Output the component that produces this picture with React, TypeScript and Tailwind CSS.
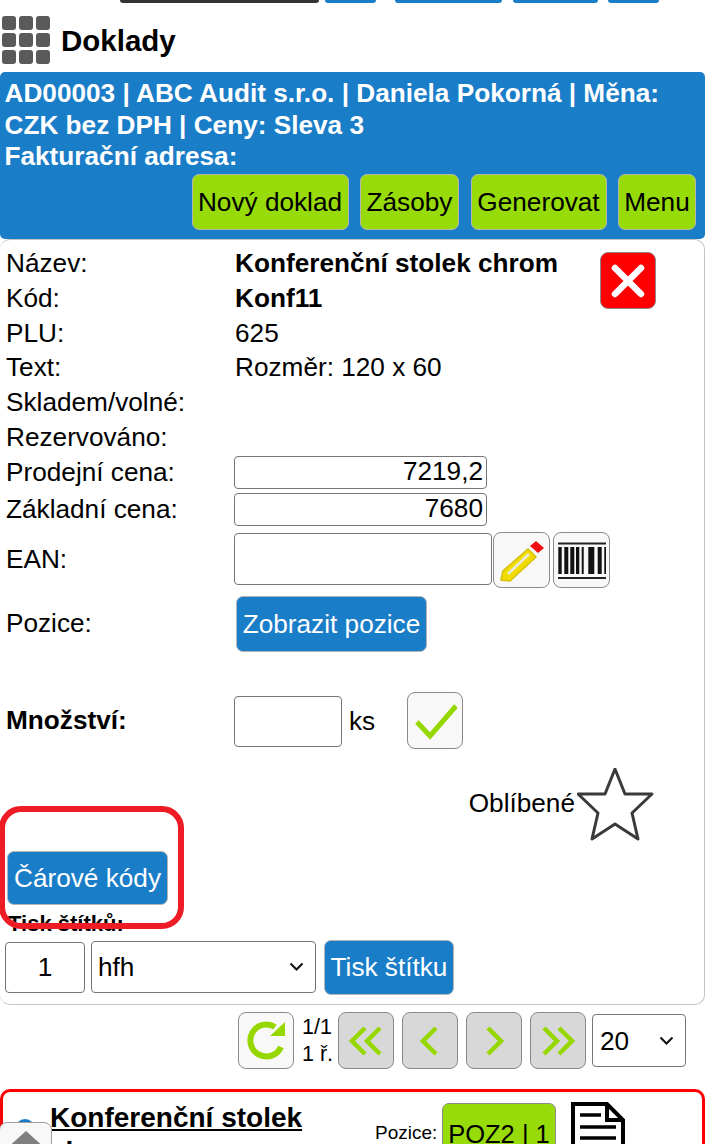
import React from "react";

const iconBtn = "flex items-center justify-center rounded-[8px] border border-[#8a8a8a] bg-[#f8f8f8]";
const input = "rounded-[4px] border border-[#767676] bg-white";
const green = "flex h-[56px] items-center justify-center rounded-[7px] border border-[#b5b5b5] bg-[#97db0a]";
const blue = "flex items-center justify-center rounded-[7px] border border-[#b5b5b5] bg-[#1a7dc8] text-white";

function Row({ label, children, bold }: { label: string; children?: React.ReactNode; bold?: boolean }) {
  return (
    <div className="flex h-[34.8px] items-center">
      <div className="w-[229px] shrink-0">{label}</div>
      <div className={bold ? "font-bold" : ""}>{children}</div>
    </div>
  );
}

function Chevron({ paths }: { paths: string[] }) {
  return (
    <svg width="36" height="32" viewBox="0 0 36 32" fill="none">
      {paths.map((d) => (
        <path key={d} d={d} stroke="#97d700" strokeWidth="4.5" />
      ))}
    </svg>
  );
}

function PagerBtn({ children }: { children: React.ReactNode }) {
  return <div className="flex h-[57px] w-[56px] items-center justify-center rounded-[8px] border border-[#8a8a8a] bg-[#d8d8d8]">{children}</div>;
}

function SelectChevron() {
  return (
    <svg width="15" height="9" viewBox="0 0 15 9" fill="none">
      <path d="M1.5 1.5 L7.5 7.5 L13.5 1.5" stroke="#111" strokeWidth="2" />
    </svg>
  );
}

export default function App() {
  return (
    <div className="relative h-[1144px] w-[705px] overflow-hidden bg-white font-['Liberation_Sans',Arial,sans-serif] text-[26.2px] leading-[32px] text-black">
      {/* Cropped toolbar along the top edge */}
      <div className="flex h-[3px] items-end overflow-hidden pl-[120px]">
        <div className="h-[3px] w-[199px] rounded-b-[3px] bg-[#333333]" />
        <div className="ml-[6px] h-[3px] w-[51px] rounded-b-[3px] bg-[#1a7dc8]" />
        <div className="ml-[19px] h-[3px] w-[107px] rounded-b-[3px] bg-[#1a7dc8]" />
        <div className="ml-[11px] h-[3px] w-[85px] rounded-b-[3px] bg-[#1a7dc8]" />
        <div className="ml-[10px] h-[3px] w-[51px] rounded-b-[3px] bg-[#1a7dc8]" />
      </div>

      {/* Title */}
      <div className="flex h-[69px] items-center pl-[2px]">
        <div className="mt-[4px] grid grid-cols-3 gap-[3px]">
          {Array.from({ length: 9 }).map((_, i) => (
            <div key={i} className="h-[14px] w-[14px] rounded-[3px] bg-[#5a5a5a]" />
          ))}
        </div>
        <div className="ml-[11px] mt-[6px] text-[29.5px] font-bold">Doklady</div>
      </div>

      {/* Header */}
      <div className="h-[167px] rounded-[5px] bg-[#1a7dc8] pl-[4.5px] pr-[5px] pt-[6px] font-bold text-white">
        <div className="h-[95px] leading-[31.6px]">
          AD00003 | ABC Audit s.r.o. | Daniela Pokorná | Měna:
          <br />
          CZK bez DPH | Ceny: Sleva 3
          <br />
          Fakturační adresa:
        </div>
        <div className="mt-[1px] flex justify-end gap-[11.5px] pr-[4px] font-normal text-black">
          <div className={`${green} w-[157px]`}>Nový doklad</div>
          <div className={`${green} w-[99px]`}>Zásoby</div>
          <div className={`${green} w-[136px]`}>Generovat</div>
          <div className={`${green} w-[78px]`}>Menu</div>
        </div>
      </div>

      {/* Item form */}
      <div className="relative h-[766px] rounded-[10px] border-b border-r border-t border-[#c4c4c4] pl-[6px] pt-[5.6px]">
        <button className="absolute left-[600px] top-[12px] flex h-[57px] w-[56px] items-center justify-center rounded-[8px] border border-[#8a8a8a] bg-[#ff0000]">
          <svg width="36" height="36" viewBox="0 0 36 36" fill="none">
            <path d="M5 5 L31 31 M31 5 L5 31" stroke="#ffffff" strokeWidth="6.5" strokeLinecap="round" />
          </svg>
        </button>

        <Row label="Název:" bold>Konferenční stolek chrom</Row>
        <Row label="Kód:" bold>Konf11</Row>
        <Row label="PLU:">625</Row>
        <Row label="Text:">Rozměr: 120 x 60</Row>
        <Row label="Skladem/volné:" />
        <Row label="Rezervováno:" />

        <div className="mt-[0.6px] flex h-[35px] items-center">
          <div className="mb-[1px] w-[228px] shrink-0">Prodejní cena:</div>
          <div className={`h-[33px] w-[253px] pr-[3px] text-right leading-[29px] ${input}`}>7219,2</div>
        </div>
        <div className="mt-[1px] flex h-[37px] items-center">
          <div className="mb-[1px] w-[228px] shrink-0">Základní cena:</div>
          <div className={`h-[33px] w-[253px] pr-[3px] text-right leading-[29px] ${input}`}>7680</div>
        </div>

        <div className="mt-[3px] flex h-[57px] items-center">
          <div className="mb-[1px] w-[228px] shrink-0">EAN:</div>
          <div className={`h-[52px] w-[258px] ${input}`} />
          <div className={`ml-[1px] mt-[1px] h-[56px] w-[57px] ${iconBtn}`}>
            <svg width="55" height="54" viewBox="0 0 55 54" fill="none">
              <path d="M7 47 L9 38 L34 16 L42 24 L16 48 Z" fill="#f2dc00" stroke="#d4c000" strokeWidth="1.5" />
              <path d="M14 41 L35 21" stroke="#e8e8d8" strokeWidth="3" />
              <path d="M42 8 L50 15 L44 20 L36 13 Z" fill="#f01010" />
            </svg>
          </div>
          <div className={`ml-[3px] mt-[1px] h-[56px] w-[57px] ${iconBtn}`}>
            <svg width="55" height="54" viewBox="0 0 55 54">
              <path d="M4 10.5 H52 M4 45 H52" stroke="#222" strokeWidth="2" />
              <path
                d="M4.3 14h3.4v27H4.3zM10.3 14h4v27h-4zM16.3 14h4v27h-4zM22 14h3.3v27H22zM27.7 14h2v27h-2zM34.3 14h6v27h-6zM43.7 14h4v27h-4zM50.3 14h1.7v27h-1.7z"
                fill="#111"
              />
            </svg>
          </div>
        </div>

        <div className="mt-[7px] flex h-[58px] items-center">
          <div className="mb-[1px] w-[230px] shrink-0">Pozice:</div>
          <div className={`${blue} h-[56px] w-[191px]`}>Zobrazit pozice</div>
        </div>

        <div className="mt-[40px] flex h-[58px] items-center">
          <div className="mb-[3px] w-[228px] shrink-0 font-bold">Množství:</div>
          <div className={`mb-[1px] h-[51px] w-[108px] ${input}`} />
          <div className="mb-[2px] ml-[7px]">ks</div>
          <div className={`mb-[3px] ml-[32px] h-[57px] w-[56px] ${iconBtn}`}>
            <svg width="44" height="44" viewBox="0 0 44 44" fill="none">
              <path d="M4 24 L17 38 L43 8" stroke="#97d700" strokeWidth="5" />
            </svg>
          </div>
        </div>

        <div className="mt-[15px] flex h-[74px] items-center justify-end pr-[49px]">
          <div className="mr-[2px] mt-[1px]">Oblíbené</div>
          <svg className="mt-[4px]" width="78" height="74" viewBox="0 0 78 74" fill="none">
            <path
              d="M38 1 L48 26 L75 26 L55 45 L61 71 L38 56 L15 71 L21 45 L1 26 L28 26 Z"
              stroke="#3a3a3a"
              strokeWidth="3"
              strokeLinejoin="round"
            />
          </svg>
        </div>

        <div className={`${blue} ml-[1px] mt-[11px] h-[54px] w-[161px]`}>Čárové kódy</div>
        <div className="mt-[7px] pl-[2px] text-[22px] font-bold leading-[24px]">Tisk štítků:</div>

        <div className="mt-[4px] flex items-center">
          <div className={`-ml-[1px] h-[51px] w-[80px] text-center leading-[48px] ${input}`}>1</div>
          <div className={`ml-[6px] flex h-[52px] w-[225px] items-center justify-between pb-[1px] pl-[6px] pr-[11px] ${input}`}>
            hfh
            <SelectChevron />
          </div>
          <div className={`${blue} ml-[8px] h-[55px] w-[130px]`}>Tisk štítku</div>
        </div>

        {/* Red annotation around the barcode button */}
        <div className="pointer-events-none absolute left-[-1px] top-[566px] h-[123px] w-[185px] rounded-[22px] border-[6px] border-[#ee1c25]" />
      </div>

      {/* Pager */}
      <div className="mt-[7px] flex h-[57px] items-center pl-[238px]">
        <div className={`h-[57px] w-[56px] ${iconBtn}`}>
          <svg width="54" height="55" viewBox="0 0 54 55" fill="none">
            <path d="M36 14 A16 16 0 1 0 42 34" stroke="#97d700" strokeWidth="6" />
            <path d="M31 23 L46 23 L46 9 Z" fill="#97d700" />
          </svg>
        </div>
        <div className="ml-[8px] w-[36px] text-[21.5px] leading-[27px]">
          1/1
          <br />
          1 ř.
        </div>
        <PagerBtn><Chevron paths={["M17 3 L4 16 L17 29", "M32 3 L19 16 L32 29"]} /></PagerBtn>
        <div className="ml-[8px]">
          <PagerBtn><Chevron paths={["M24 3 L11 16 L24 29"]} /></PagerBtn>
        </div>
        <div className="ml-[8px]">
          <PagerBtn><Chevron paths={["M12 3 L25 16 L12 29"]} /></PagerBtn>
        </div>
        <div className="ml-[8px]">
          <PagerBtn><Chevron paths={["M4 3 L17 16 L4 29", "M19 3 L32 16 L19 29"]} /></PagerBtn>
        </div>
        <div className={`ml-[6px] flex h-[53px] w-[94px] items-center justify-between pl-[7px] pr-[11px] ${input}`}>
          20
          <SelectChevron />
        </div>
      </div>

      {/* Result card */}
      <div className="mt-[20px] flex h-[200px] items-start rounded-[10px] border-[3px] border-[#ff0000] pl-[12px]">
        <div className="mt-[27px] h-[20px] w-[20px] shrink-0 rounded-full bg-[#1a7dc8]" />
        <div className="ml-[15px] mt-[10px] w-[301px] text-[28px] font-bold underline">
          Konferenční stolek
          <div className="mt-[2px]">chrom</div>
        </div>
        <div className="ml-[24px] mt-[29px] w-[67px] text-[19px] leading-[24px]">Pozice:</div>
        <div className="mt-[11px] flex h-[80px] w-[114px] items-start justify-center rounded-[7px] border border-[#8a8a8a] bg-[#97db0a] pt-[14px] text-[25.5px]">POZ2 | 1</div>
        <svg className="ml-[15px] mt-[10px]" width="54" height="70" viewBox="0 0 54 70" fill="none">
          <path d="M2 2 H36 L52 18 V68 H2 Z M36 2 V18 H52" stroke="#000" strokeWidth="4" strokeLinejoin="miter" />
          <path d="M9 13 H30 M9 25 H45 M9 36 H45" stroke="#000" strokeWidth="3.5" />
        </svg>
      </div>

      {/* Floating home button over the card */}
      <div className="absolute left-[-1px] top-[1122px] flex h-[40px] w-[53px] items-start justify-center rounded-[8px] border border-[#a0a0a0] bg-[#f8f8f8] pt-[8px]">
        <svg width="40" height="24" viewBox="0 0 40 24">
          <path d="M20 0 L40 18 V24 H0 V18 Z" fill="#808080" />
        </svg>
      </div>
    </div>
  );
}
